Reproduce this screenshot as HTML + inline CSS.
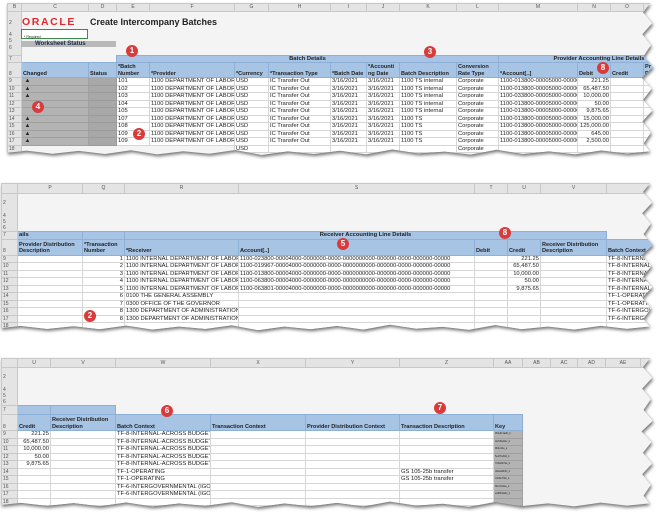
<!DOCTYPE html>
<html><head><meta charset="utf-8"><style>
*{margin:0;padding:0;box-sizing:border-box}
body{width:660px;height:516px;background:#fff;position:relative;overflow:hidden;font-family:"Liberation Sans",Arial,sans-serif;color:#222}
.wrap{position:absolute;filter:drop-shadow(1px 2px 1.5px rgba(0,0,0,.55))}
.panel{position:relative;background:#f4f4f4;overflow:hidden;
clip-path:polygon(0 0,98.5% 0,97.4% 6%,98.8% 13%,97.3% 20%,98.6% 27%,97.5% 34%,98.9% 41%,97.2% 48%,98.7% 55%,97.4% 62%,98.8% 69%,97.3% 76%,98.6% 83%,97.5% 90%,98.4% 95%,95% 96.5%,91% 94.5%,87% 97%,83% 95%,79% 96.8%,75% 94%,71% 97.2%,67% 95.2%,63% 96.4%,59% 93.8%,55% 97%,51% 94.6%,47% 96.8%,43% 95%,39% 97.4%,35% 94.2%,31% 96.6%,27% 95%,23% 97%,19% 94.4%,15% 96.8%,11% 94.8%,7% 96.6%,3% 94.6%,0 96%)}
table{border-collapse:collapse;table-layout:fixed;position:absolute;left:0;top:0}
td{border:1px solid #d6d6d6;padding:0 1px;white-space:nowrap;overflow:hidden;font-size:5.8px;line-height:6.5px;background:#fff}
tr.d td{height:7.5px}
tr.ch td{background:#e4e4e4;text-align:center;font-size:5px;color:#555;border-color:#c8c8c8}
td.rn{background:#e4e4e4;color:#555;font-size:5px;border-color:#c8c8c8;text-align:left}
td.e{background:transparent;border:none}
td.h{background:#a7c4e4;font-weight:bold;vertical-align:bottom;border-color:#8fb0d6;font-size:5.6px;line-height:6.5px;white-space:normal}
td.b{background:#a7c4e4;font-weight:bold;border-color:#8fb0d6;font-size:5.8px}
td.g{background:#b3b3b3;border-color:#a0a0a0}
td.g2{background:#a8a8a8;border-color:#9a9a9a}
td.r{text-align:right}
.nw{white-space:nowrap!important}
.badge{position:absolute;width:12px;height:12px;border-radius:50%;background:#d93a3a;color:#fff;font-size:8px;font-weight:bold;text-align:center;line-height:12px}
</style></head><body>

<!-- PANEL 1 -->
<div class="wrap" style="left:7px;top:3px"><div class="panel" style="width:653px;height:156px">
<table style="width:653px">
<colgroup><col style="width:14px"><col style="width:67px"><col style="width:28px"><col style="width:33px"><col style="width:85px"><col style="width:34px"><col style="width:62px"><col style="width:36px"><col style="width:33px"><col style="width:57px"><col style="width:42px"><col style="width:79px"><col style="width:33px"><col style="width:33px"><col style="width:17px"></colgroup>
<tr class="ch" style="height:6px"><td>B</td><td>C</td><td>D</td><td>E</td><td>F</td><td>G</td><td>H</td><td>I</td><td>J</td><td>K</td><td>L</td><td>M</td><td>N</td><td>O</td><td>P</td></tr>
<tr style="height:44px"><td class="rn" style="vertical-align:top;line-height:6.3px;padding-top:8px">2<br><br>4<br>5<br>6</td><td class="e" colspan="14"></td></tr>
<tr style="height:7px"><td class="rn">7</td><td class="e" colspan="2"></td><td class="b" colspan="8" style="text-align:center">Batch Details</td><td class="b" colspan="4" style="text-align:center;padding-left:40px">Provider Accounting Line Details</td></tr>
<tr style="height:15px"><td class="rn" style="vertical-align:bottom">8</td><td class="h">Changed</td><td class="h">Status</td><td class="h">*Batch Number</td><td class="h">*Provider</td><td class="h nw">*Currency</td><td class="h nw">*Transaction Type</td><td class="h nw">*Batch Date</td><td class="h">*Accounti ng Date</td><td class="h nw">Batch Description</td><td class="h">Conversion Rate Type</td><td class="h">*Account[..]</td><td class="h">Debit</td><td class="h">Credit</td><td class="h">Pr De</td></tr>
<tr class="d"><td class="rn">9</td><td class="g">&nbsp;▲</td><td class="g2"></td><td>101</td><td>1100 DEPARTMENT OF LABOR</td><td>USD</td><td>IC Transfer Out</td><td>3/16/2021</td><td>3/16/2021</td><td>1100 TS internal</td><td>Corporate</td><td>1100-013800-00005000-00000</td><td class="r">221.25</td><td></td><td></td></tr>
<tr class="d"><td class="rn">10</td><td class="g">&nbsp;▲</td><td class="g2"></td><td>102</td><td>1100 DEPARTMENT OF LABOR</td><td>USD</td><td>IC Transfer Out</td><td>3/16/2021</td><td>3/16/2021</td><td>1100 TS internal</td><td>Corporate</td><td>1100-013800-00005000-00000</td><td class="r">65,487.50</td><td></td><td></td></tr>
<tr class="d"><td class="rn">11</td><td class="g">&nbsp;▲</td><td class="g2"></td><td>103</td><td>1100 DEPARTMENT OF LABOR</td><td>USD</td><td>IC Transfer Out</td><td>3/16/2021</td><td>3/16/2021</td><td>1100 TS internal</td><td>Corporate</td><td>1100-033800-00005000-00000</td><td class="r">10,000.00</td><td></td><td></td></tr>
<tr class="d"><td class="rn">12</td><td class="g"></td><td class="g2"></td><td>104</td><td>1100 DEPARTMENT OF LABOR</td><td>USD</td><td>IC Transfer Out</td><td>3/16/2021</td><td>3/16/2021</td><td>1100 TS internal</td><td>Corporate</td><td>1100-013800-00005000-00000</td><td class="r">50.00</td><td></td><td></td></tr>
<tr class="d"><td class="rn">13</td><td class="g"></td><td class="g2"></td><td>105</td><td>1100 DEPARTMENT OF LABOR</td><td>USD</td><td>IC Transfer Out</td><td>3/16/2021</td><td>3/16/2021</td><td>1100 TS internal</td><td>Corporate</td><td>1100-013800-00005000-00000</td><td class="r">9,875.65</td><td></td><td></td></tr>
<tr class="d"><td class="rn">14</td><td class="g">&nbsp;▲</td><td class="g2"></td><td>107</td><td>1100 DEPARTMENT OF LABOR</td><td>USD</td><td>IC Transfer Out</td><td>3/16/2021</td><td>3/16/2021</td><td>1100 TS</td><td>Corporate</td><td>1100-013800-00005000-00000</td><td class="r">15,000.00</td><td></td><td></td></tr>
<tr class="d"><td class="rn">15</td><td class="g">&nbsp;▲</td><td class="g2"></td><td>108</td><td>1100 DEPARTMENT OF LABOR</td><td>USD</td><td>IC Transfer Out</td><td>3/16/2021</td><td>3/16/2021</td><td>1100 TS</td><td>Corporate</td><td>1100-013800-00005000-00000</td><td class="r">125,000.00</td><td></td><td></td></tr>
<tr class="d"><td class="rn">16</td><td class="g">&nbsp;▲</td><td class="g2"></td><td>109</td><td>1100 DEPARTMENT OF LABOR</td><td>USD</td><td>IC Transfer Out</td><td>3/16/2021</td><td>3/16/2021</td><td>1100 TS</td><td>Corporate</td><td>1100-013800-00005000-00000</td><td class="r">645.00</td><td></td><td></td></tr>
<tr class="d"><td class="rn">17</td><td class="g">&nbsp;▲</td><td class="g2"></td><td>109</td><td>1100 DEPARTMENT OF LABOR</td><td>USD</td><td>IC Transfer Out</td><td>3/16/2021</td><td>3/16/2021</td><td>1100 TS</td><td>Corporate</td><td>1100-013800-00005000-00000</td><td class="r">2,500.00</td><td></td><td></td></tr>
<tr class="d"><td class="rn">18</td><td class="e" colspan="4"></td><td>USD</td><td></td><td></td><td></td><td></td><td>Corporate</td><td></td><td></td><td></td><td></td></tr>
</table>
<div style="position:absolute;left:15px;top:14px;color:#e8262a;font-size:10.5px;font-weight:bold;letter-spacing:1.6px;line-height:10px">ORACLE</div>
<div style="position:absolute;left:83px;top:14px;font-size:9px;font-weight:bold;color:#222;line-height:10px">Create Intercompany Batches</div>
<div style="position:absolute;left:14px;top:26px;width:67px;height:10px;border:1px solid #3c8a4a;background:#fff;font-size:3.5px;padding:5px 0 0 2px">* Required</div>
<div style="position:absolute;left:14px;top:38px;width:95px;height:6px;background:#b8b8b8;font-size:6px;font-weight:bold;line-height:6px;padding-left:14px;color:#1a2a4a">Worksheet Status</div>
</div></div>

<!-- PANEL 2 -->
<div class="wrap" style="left:1px;top:183px"><div class="panel" style="width:659px;height:151px">
<table style="width:659px">
<colgroup><col style="width:16px"><col style="width:65px"><col style="width:42px"><col style="width:114px"><col style="width:236px"><col style="width:33px"><col style="width:33px"><col style="width:66px"><col style="width:54px"></colgroup>
<tr class="ch" style="height:10px"><td></td><td>P</td><td>Q</td><td>R</td><td>S</td><td>T</td><td>U</td><td>V</td><td></td></tr>
<tr style="height:38px"><td class="rn" style="vertical-align:top;line-height:6.3px;padding-top:6px">2<br><br>4<br>5<br>6</td><td class="e" colspan="8"></td></tr>
<tr style="height:7px"><td class="rn">7</td><td class="b">ails</td><td class="b"></td><td class="b" colspan="5" style="text-align:center">Receiver Accounting Line Details</td><td class="e"></td></tr>
<tr style="height:16px"><td class="rn" style="vertical-align:bottom">8</td><td class="h">Provider Distribution Description</td><td class="h">*Transaction Number</td><td class="h">*Receiver</td><td class="h">Account[..]</td><td class="h">Debit</td><td class="h">Credit</td><td class="h">Receiver Distribution Description</td><td class="h nw">Batch Context</td></tr>
<tr class="d"><td class="rn">9</td><td></td><td class="r">1</td><td>1100 INTERNAL DEPARTMENT OF LABOR</td><td>1100-023800-00004000-0000000-0000-0000000000-000000-0000-000000-00000</td><td></td><td class="r">221.25</td><td></td><td>TF-8-INTERNAL-</td></tr>
<tr class="d"><td class="rn">10</td><td></td><td class="r">2</td><td>1100 INTERNAL DEPARTMENT OF LABOR</td><td>1100-019967-00004000-0000000-0000-0000000000-000000-0000-000000-00000</td><td></td><td class="r">65,487.50</td><td></td><td>TF-8-INTERNAL-</td></tr>
<tr class="d"><td class="rn">11</td><td></td><td class="r">3</td><td>1100 INTERNAL DEPARTMENT OF LABOR</td><td>1100-013800-00004000-0000000-0000-0000000000-000000-0000-000000-00000</td><td></td><td class="r">10,000.00</td><td></td><td>TF-8-INTERNAL-</td></tr>
<tr class="d"><td class="rn">12</td><td></td><td class="r">4</td><td>1100 INTERNAL DEPARTMENT OF LABOR</td><td>1100-063800-00004000-0000000-0000-0000000000-000000-0000-000000-00000</td><td></td><td class="r">50.00</td><td></td><td>TF-8-INTERNAL-</td></tr>
<tr class="d"><td class="rn">13</td><td></td><td class="r">5</td><td>1100 INTERNAL DEPARTMENT OF LABOR</td><td>1100-063801-00004000-0000000-0000-0000000000-000000-0000-000000-00000</td><td></td><td class="r">9,875.65</td><td></td><td>TF-8-INTERNAL-</td></tr>
<tr class="d"><td class="rn">14</td><td></td><td class="r">6</td><td>0100 THE GENERAL ASSEMBLY</td><td></td><td></td><td></td><td></td><td>TF-1-OPERATING</td></tr>
<tr class="d"><td class="rn">15</td><td></td><td class="r">7</td><td>0300 OFFICE OF THE GOVERNOR</td><td></td><td></td><td></td><td></td><td>TF-1-OPERATING</td></tr>
<tr class="d"><td class="rn">16</td><td></td><td class="r">8</td><td>1300 DEPARTMENT OF ADMINISTRATION</td><td></td><td></td><td></td><td></td><td>TF-6-INTERGOVE</td></tr>
<tr class="d"><td class="rn">17</td><td></td><td class="r">8</td><td>1300 DEPARTMENT OF ADMINISTRATION</td><td></td><td></td><td></td><td></td><td>TF-6-INTERGOVE</td></tr>
<tr class="d"><td class="rn">18</td><td></td><td></td><td></td><td></td><td></td><td></td><td></td><td></td></tr>
</table>
</div></div>

<!-- PANEL 3 -->
<div class="wrap" style="left:1px;top:358px"><div class="panel" style="width:659px;height:153px">
<table style="width:659px">
<colgroup><col style="width:16px"><col style="width:33px"><col style="width:65px"><col style="width:95px"><col style="width:95px"><col style="width:94px"><col style="width:94px"><col style="width:29px"><col style="width:28px"><col style="width:27px"><col style="width:28px"><col style="width:35px"><col style="width:20px"></colgroup>
<tr class="ch" style="height:9px"><td></td><td>U</td><td>V</td><td>W</td><td>X</td><td>Y</td><td>Z</td><td>AA</td><td>AB</td><td>AC</td><td>AD</td><td>AE</td><td>AF</td></tr>
<tr style="height:38px"><td class="rn" style="vertical-align:top;line-height:6.3px;padding-top:6px">2<br><br>4<br>5<br>6</td><td class="e" colspan="12"></td></tr>
<tr style="height:9px"><td class="rn">7</td><td class="b"></td><td class="b"></td><td class="e" colspan="10"></td></tr>
<tr style="height:16px"><td class="rn" style="vertical-align:bottom">8</td><td class="h">Credit</td><td class="h">Receiver Distribution Description</td><td class="h">Batch Context</td><td class="h">Transaction Context</td><td class="h">Provider Distribution Context</td><td class="h">Transaction Description</td><td class="h">Key</td><td class="e" colspan="5"></td></tr>
<tr class="d"><td class="rn">9</td><td class="r">221.25</td><td></td><td>TF-8-INTERNAL-ACROSS BUDGET O</td><td></td><td></td><td></td><td class="g" style="font-size:2.5px">0f4e9c1a2b_k</td><td class="e" colspan="5"></td></tr>
<tr class="d"><td class="rn">10</td><td class="r">65,487.50</td><td></td><td>TF-8-INTERNAL-ACROSS BUDGET O</td><td></td><td></td><td></td><td class="g" style="font-size:2.5px">3a7d0e91c_k</td><td class="e" colspan="5"></td></tr>
<tr class="d"><td class="rn">11</td><td class="r">10,000.00</td><td></td><td>TF-8-INTERNAL-ACROSS BUDGET O</td><td></td><td></td><td></td><td class="g" style="font-size:2.5px">9b2c44e_k</td><td class="e" colspan="5"></td></tr>
<tr class="d"><td class="rn">12</td><td class="r">50.00</td><td></td><td>TF-8-INTERNAL-ACROSS BUDGET O</td><td></td><td></td><td></td><td class="g" style="font-size:2.5px">5e1f7a30d_k</td><td class="e" colspan="5"></td></tr>
<tr class="d"><td class="rn">13</td><td class="r">9,875.65</td><td></td><td>TF-8-INTERNAL-ACROSS BUDGET O</td><td></td><td></td><td></td><td class="g" style="font-size:2.5px">7c8a2b19e_k</td><td class="e" colspan="5"></td></tr>
<tr class="d"><td class="rn">14</td><td></td><td></td><td>TF-1-OPERATING</td><td></td><td></td><td>GS 105-25b transfer</td><td class="g" style="font-size:2.5px">d4e0a9b3c_k</td><td class="e" colspan="5"></td></tr>
<tr class="d"><td class="rn">15</td><td></td><td></td><td>TF-1-OPERATING</td><td></td><td></td><td>GS 105-25b transfer</td><td class="g" style="font-size:2.5px">c1b8e7f42_k</td><td class="e" colspan="5"></td></tr>
<tr class="d"><td class="rn">16</td><td></td><td></td><td>TF-6-INTERGOVERNMENTAL (IGO)</td><td></td><td></td><td></td><td class="g" style="font-size:2.5px">f0a7c3d1e_k</td><td class="e" colspan="5"></td></tr>
<tr class="d"><td class="rn">17</td><td></td><td></td><td>TF-6-INTERGOVERNMENTAL (IGO)</td><td></td><td></td><td></td><td class="g" style="font-size:2.5px">e2d5b9a0c_k</td><td class="e" colspan="5"></td></tr>
<tr class="d"><td class="rn">18</td><td></td><td></td><td></td><td></td><td></td><td></td><td class="g"></td><td class="e" colspan="5"></td></tr>
</table>
</div></div>

<div class="badge" style="left:126px;top:45px">1</div>
<div class="badge" style="left:133px;top:128px">2</div>
<div class="badge" style="left:424px;top:46px">3</div>
<div class="badge" style="left:32px;top:101px">4</div>
<div class="badge" style="left:597px;top:62px">8</div>
<div class="badge" style="left:337px;top:238px">5</div>
<div class="badge" style="left:499px;top:227px">8</div>
<div class="badge" style="left:84px;top:310px">2</div>
<div class="badge" style="left:161px;top:405px">6</div>
<div class="badge" style="left:434px;top:402px">7</div>
</body></html>
